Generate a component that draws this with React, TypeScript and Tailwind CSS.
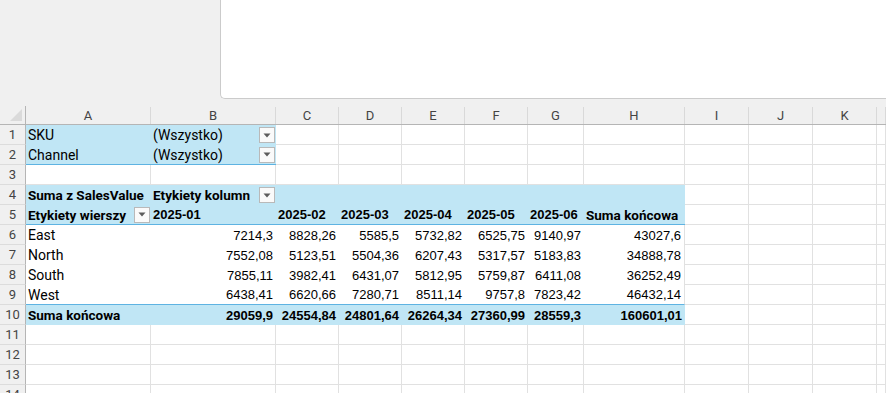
import React from 'react'
import clsx from 'clsx'

type C = {
  t?: string
  k?: 'grid' | 'blue' | 'body'
  bb?: 'grid' | 'blue' | 'none'
  br?: boolean
  num?: boolean
  bold?: boolean
  dd?: boolean
}

const letters = ['A', 'B', 'C', 'D', 'E', 'F', 'G', 'H', 'I', 'J', 'K', '']

const g = (): C => ({ k: 'grid' })
const free = () => [g(), g(), g(), g()]

const vals: [string, string[]][] = [
  ['East', ['7214,3', '8828,26', '5585,5', '5732,82', '6525,75', '9140,97', '43027,6']],
  ['North', ['7552,08', '5123,51', '5504,36', '6207,43', '5317,57', '5183,83', '34888,78']],
  ['South', ['7855,11', '3982,41', '6431,07', '5812,95', '5759,87', '6411,08', '36252,49']],
  ['West', ['6438,41', '6620,66', '7280,71', '8511,14', '9757,8', '7823,42', '46432,14']],
]
const totals = ['29059,9', '24554,84', '24801,64', '26264,34', '27360,99', '28559,3', '160601,01']
const months = ['2025-01', '2025-02', '2025-03', '2025-04', '2025-05', '2025-06']

function buildRows(): C[][] {
  const rows: C[][] = []
  const blank = (): C[] => letters.map(() => g())
  // 1-2 filters
  rows.push([
    { t: 'SKU', k: 'blue', bb: 'none' },
    { t: '(Wszystko)', k: 'blue', bb: 'none', dd: true },
    ...blank().slice(2),
  ])
  rows.push([
    { t: 'Channel', k: 'blue', bb: 'blue' },
    { t: '(Wszystko)', k: 'blue', bb: 'blue', dd: true },
    ...blank().slice(2),
  ])
  rows.push(blank())
  rows.push([
    { t: 'Suma z SalesValue', k: 'blue', bb: 'none', bold: true },
    { t: 'Etykiety kolumn', k: 'blue', bb: 'none', bold: true, dd: true },
    ...Array.from({ length: 6 }, (): C => ({ k: 'blue', bb: 'none' })),
    ...free(),
  ])
  rows.push([
    { t: 'Etykiety wierszy', k: 'blue', bb: 'blue', bold: true, dd: true },
    ...months.map((m): C => ({ t: m, k: 'blue', bb: 'blue', bold: true, num: true })),
    { t: 'Suma końcowa', k: 'blue', bb: 'blue', bold: true },
    ...free(),
  ])
  vals.forEach(([name, v], i) => {
    const last = i === vals.length - 1
    rows.push([
      { t: name, k: 'body', bb: last ? 'blue' : 'none' },
      ...v.map((n, j): C => ({ t: n, k: 'body', bb: last ? 'blue' : 'none', num: true, br: j === 6 })),
      ...free(),
    ])
  })
  rows.push([
    { t: 'Suma końcowa', k: 'blue', bb: 'none', bold: true },
    ...totals.map((n): C => ({ t: n, k: 'blue', bb: 'none', num: true, bold: true })),
    ...free(),
  ])
  for (let i = 0; i < 4; i++) rows.push(blank())
  return rows
}

function Dropdown() {
  return (
    <div className="ml-auto mr-[1px] flex h-[16px] w-[16px] shrink-0 items-center justify-center border border-[#b9b9b9] bg-[#fafafa]">
      <svg width="8" height="5" viewBox="0 0 8 5">
        <path d="M0.5 0.5 L7.5 0.5 L4 4.5 Z" fill="#5c5c5c" />
      </svg>
    </div>
  )
}

function Cell({ c }: { c: C }) {
  const isNum = c.num && c.t && !c.t.startsWith('2025')
  return (
    <div
      className={clsx(
        'flex h-[20px] min-w-0 items-center overflow-visible whitespace-nowrap',
        c.k === 'grid' && 'border-r border-b border-[#e1e1e1] bg-white',
        c.k === 'blue' && 'bg-[#c0e6f5]',
        c.k === 'body' && 'bg-white',
        c.bb === 'blue' && 'border-b border-[#5eb3e2]',
        c.br && 'border-r border-r-[#e1e1e1]',
        isNum ? 'justify-end pr-[3px]' : 'pl-[2px]',
        c.num
          ? "font-['Liberation_Sans',Arial,sans-serif] text-[13px]"
          : c.bold
            ? 'text-[13.5px]'
            : 'text-[14px]',
        c.bold && 'font-bold',
      )}
    >
      {c.t && <span className="pt-[1px] text-black">{c.t}</span>}
      {c.dd && <Dropdown />}
    </div>
  )
}

export default function App() {
  const rows = buildRows()
  return (
    <div className="h-[393px] w-[886px] overflow-hidden bg-[#f0f0f0] font-['Roboto','Liberation_Sans',sans-serif]">
      <div className="flex h-[106px]">
        <div className="w-[220px]" />
        <div className="h-[99px] flex-1 rounded-bl-[5px] border-b border-l border-[#cbcbcb] bg-white" />
      </div>

      <div className="grid grid-cols-[26px_125px_125px_63px_63px_63px_63px_56px_101px_64px_64px_64px_1fr]">
        {/* column headers */}
        <div className="relative h-[19px] border-r border-b border-[#b5b5b5]">
          <svg className="absolute right-[3px] bottom-[3px]" width="12" height="12" viewBox="0 0 12 12">
            <path d="M12 0 L12 12 L0 12 Z" fill="#dadada" />
          </svg>
        </div>
        {letters.map((l, i) => (
          <div
            key={i}
            className="flex h-[19px] items-center justify-center border-b border-[#b5b5b5] pt-[1px] text-[13px] text-[#444]"
          >
            <div className="flex h-full w-full items-center justify-center border-r border-[#d9d9d9]">{l}</div>
          </div>
        ))}

        {rows.map((r, i) => (
          <React.Fragment key={i}>
            <div className="flex h-[20px] items-center justify-center border-r border-b border-r-[#b5b5b5] border-b-[#dcdcdc] bg-[#f0f0f0] pt-[1px] text-[13px] text-[#444]">
              {i + 1}
            </div>
            {r.map((c, j) => (
              <Cell key={j} c={c} />
            ))}
          </React.Fragment>
        ))}
      </div>
    </div>
  )
}
